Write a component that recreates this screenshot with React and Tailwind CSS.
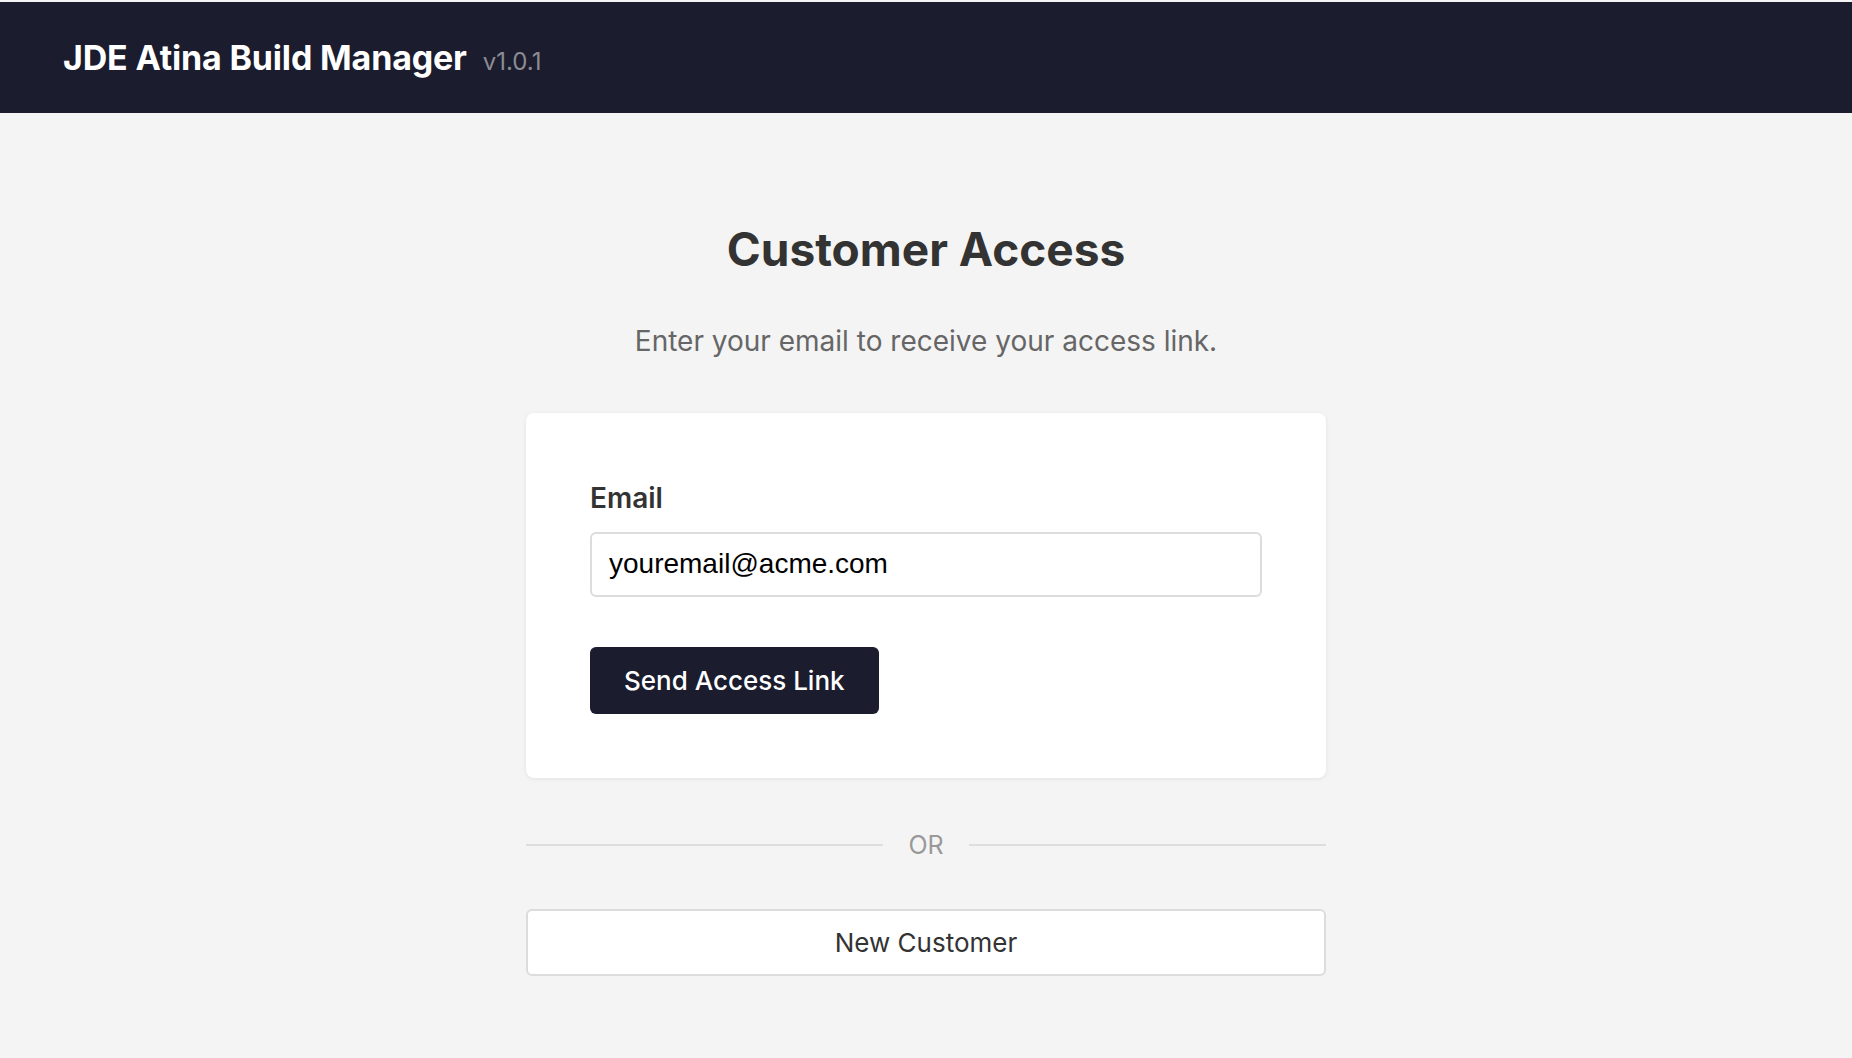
import React from "react";

const CustomerAccess = () => {
    return (
        <div className="min-h-screen bg-[#f4f4f4] pt-[2px] font-['Inter',sans-serif]">
            {/* Header */}
            <header className="h-[111px] bg-[#1b1c2e] px-[63px] flex items-center">
                <div className="flex items-baseline gap-4">
                    <span className="text-[34px] font-bold text-white tracking-[-0.005em]">JDE Atina Build Manager</span>
                    <span className="text-[24px] text-[#8c8c94]">v1.0.1</span>
                </div>
            </header>

            {/* Main */}
            <main className="w-[800px] mx-auto pt-[108px] pb-16">
                <h1 className="text-center text-[46px] font-bold text-[#333] leading-tight">Customer Access</h1>
                <p className="mt-[41px] text-center text-[28px] text-[#666]">
                    Enter your email to receive your access link.
                </p>

                {/* Card */}
                <div className="mt-[51px] bg-white rounded-lg shadow-[0_1px_4px_rgba(0,0,0,0.08)] px-16 pt-[71px] pb-16">
                    <label className="block text-[28px] font-semibold text-[#333] leading-none">Email</label>
                    <input
                        type="email"
                        defaultValue="youremail@acme.com"
                        className="mt-[20px] w-full h-[65px] px-[17px] border-2 border-[#dcdcdc] rounded-md bg-white text-[28px] text-black font-['Liberation_Sans',Arial,sans-serif] outline-none"
                    />
                    <button className="mt-[50px] h-[67px] px-[34px] rounded-md bg-[#1b1c2e] text-white text-[26px] font-medium">
                        Send Access Link
                    </button>
                </div>

                {/* Divider */}
                <div className="mt-[49px] flex items-center gap-[25px]">
                    <div className="flex-1 h-[2px] bg-[#dedede]" />
                    <span className="text-[25px] text-[#999]">OR</span>
                    <div className="flex-1 h-[2px] bg-[#dedede]" />
                </div>

                {/* New customer */}
                <button className="mt-[45px] w-full h-[67px] rounded-md border-2 border-[#dcdcdc] bg-white text-[26px] text-[#333]">
                    New Customer
                </button>
            </main>
        </div>
    );
};

export default CustomerAccess;
